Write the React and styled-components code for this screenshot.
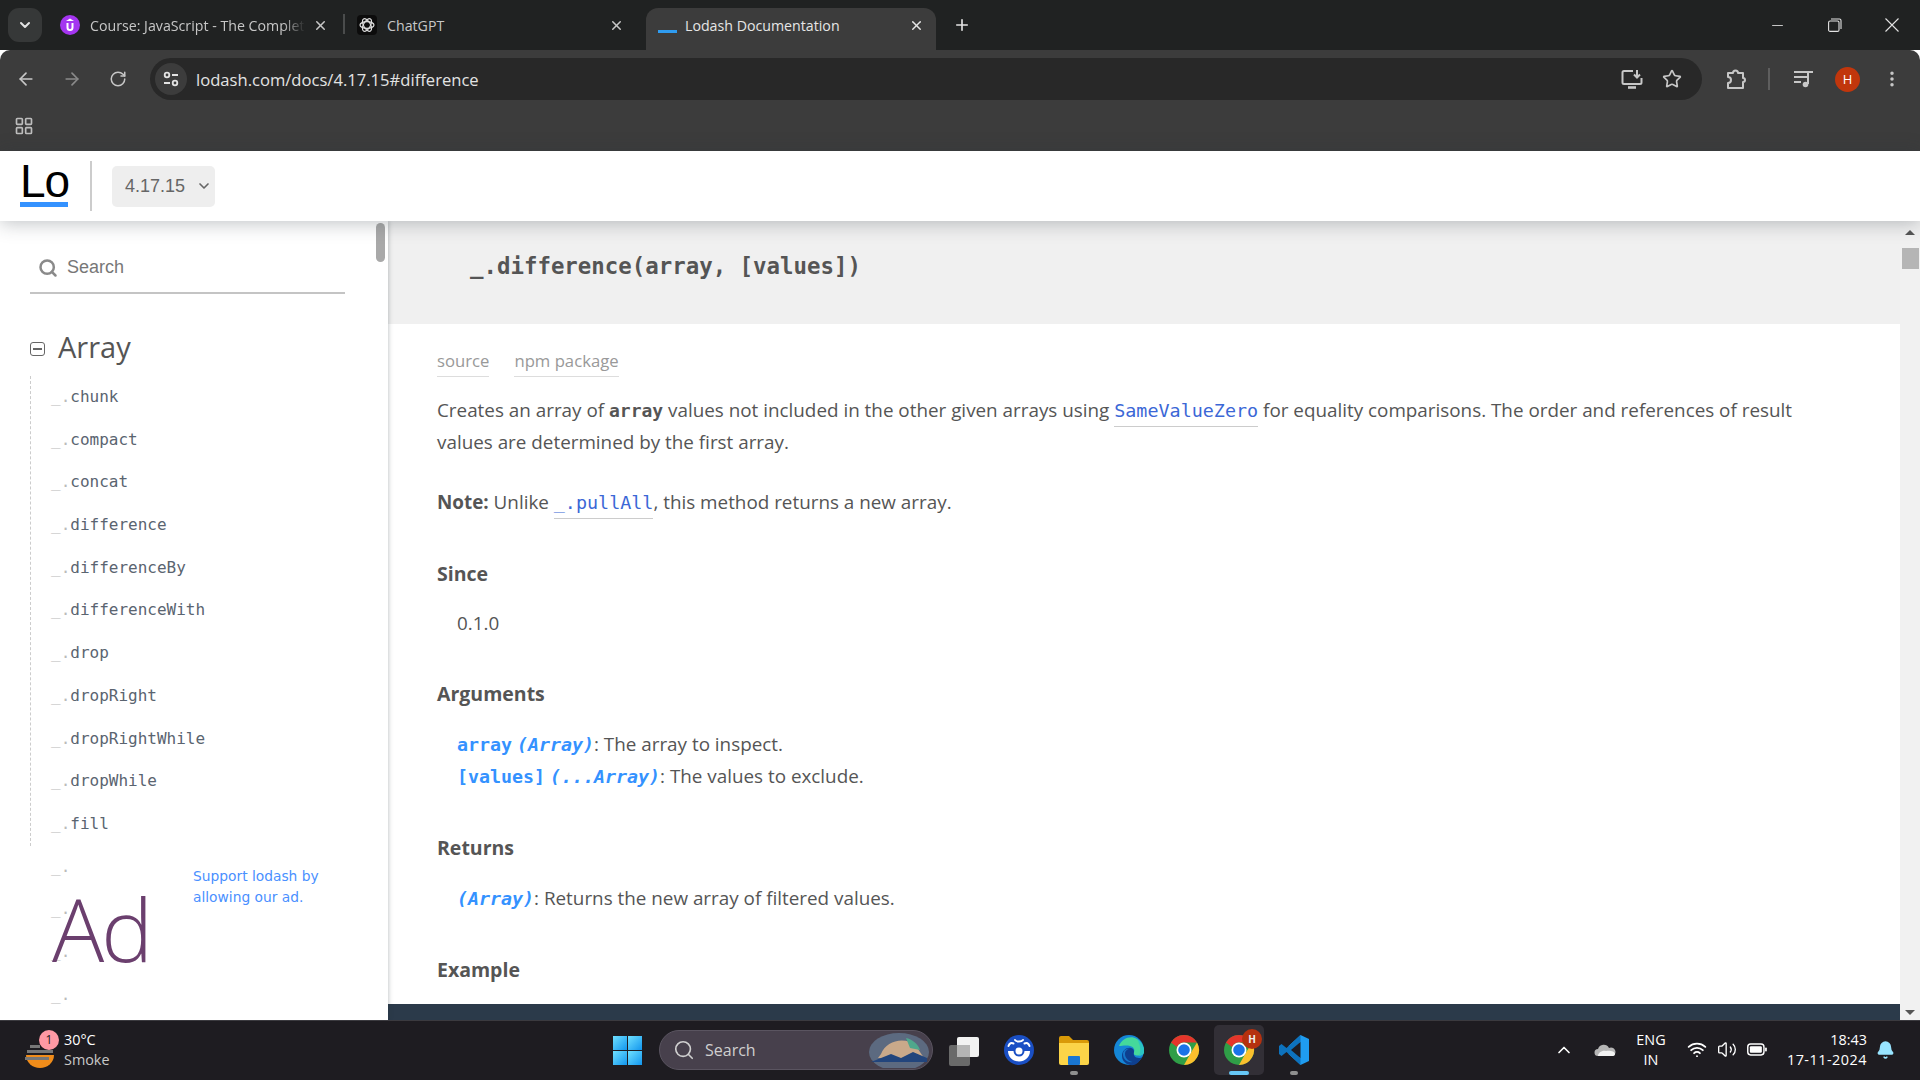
import React from 'react';
import styled, { createGlobalStyle } from 'styled-components';
import {
  ArrowLeft, ArrowRight, Bell, ChevronDown, ChevronUp, EllipsisVertical, LayoutGrid,
  Minus, Plus, RotateCw, Search, Star, Volume2, Wifi, X,
} from 'lucide-react';

const GlobalStyle = createGlobalStyle`
  html, body { margin: 0; padding: 0; background: #fff; overflow: hidden; }
  * { box-sizing: border-box; }
`;

const SANS = '"Open Sans", "Noto Sans", sans-serif';
const MONO = '"DejaVu Sans Mono", "Liberation Mono", monospace';

const Page = styled.div`
  width: 1920px;
  height: 1080px;
  display: flex;
  flex-direction: column;
  overflow: hidden;
  font-family: ${SANS};
`;

/* browser chrome */
const TabStrip = styled.div`
  height: 50px;
  flex: none;
  background: #202222;
  display: flex;
  align-items: flex-end;
  padding-left: 8px;
  color: #c7c7c7;
`;
const TabMenu = styled.div`
  width: 34px;
  height: 34px;
  margin-bottom: 8px;
  margin-right: 6px;
  border-radius: 11px;
  background: #363838;
  color: #e3e3e3;
  display: flex;
  align-items: center;
  justify-content: center;
`;
const Tab = styled.div`
  width: ${(p) => p.$w}px;
  height: 42px;
  padding: 0 12px 8px 12px;
  display: flex;
  align-items: center;
  border-radius: 12px 12px 0 0;
  background: ${(p) => (p.$active ? '#3c3c3c' : 'transparent')};
  color: ${(p) => (p.$active ? '#e6e6e6' : '#c7c7c7')};
  font-size: 14.2px;
  margin-left: ${(p) => p.$ml || 0}px;
`;
const TabIcon = styled.div`
  width: 20px;
  height: 20px;
  flex: none;
  margin-right: ${(p) => p.$gap || 10}px;
  display: flex;
  align-items: center;
  justify-content: center;
`;
const TabTitle = styled.div`
  flex: 1;
  white-space: nowrap;
  overflow: hidden;
  mask-image: ${(p) => (p.$fade ? 'linear-gradient(90deg, #000 90%, transparent 100%)' : 'none')};
`;
const TabSeparator = styled.div`
  width: 2px;
  height: 20px;
  background: #4a4c4c;
  margin: 0 0 16px 3px;
`;
const TabAdd = styled.div`
  width: 30px;
  height: 30px;
  margin: 0 0 10px 11px;
  color: #e3e3e3;
  display: flex;
  align-items: center;
  justify-content: center;
`;
const WindowControls = styled.div`
  margin-left: auto;
  height: 50px;
  display: flex;
  color: #e3e3e3;
`;
const WindowButton = styled.div`
  width: 57px;
  height: 50px;
  display: flex;
  align-items: center;
  justify-content: center;
`;
const Toolbar = styled.div`
  height: 58px;
  flex: none;
  background: #3c3c3c;
  border-radius: 10px 10px 0 0;
  display: flex;
  align-items: center;
  padding: 0 10px 0 8px;
  gap: 10px;
  color: #c7c7c7;
`;
const NavButton = styled.div`
  width: 36px;
  height: 36px;
  flex: none;
  display: flex;
  align-items: center;
  justify-content: center;
  color: ${(p) => (p.$dim ? '#8a8a8a' : '#c7c7c7')};
`;
const AddressBar = styled.div`
  width: 1552px;
  height: 42px;
  flex: none;
  margin-left: 4px;
  margin-right: 6px;
  border-radius: 21px;
  background: #282828;
  display: flex;
  align-items: center;
  padding: 0 20px 0 5px;
`;
const SiteInfo = styled.div`
  width: 32px;
  height: 32px;
  border-radius: 50%;
  background: #3c3c3c;
  color: #e3e3e3;
  display: flex;
  align-items: center;
  justify-content: center;
  margin-right: 9px;
`;
const UrlText = styled.div`
  flex: 1;
  font-size: 16.6px;
  color: #e3e3e3;
`;
const AddressActions = styled.div`
  display: flex;
  align-items: center;
  gap: 19px;
  color: #c7c7c7;
`;
const ToolDivider = styled.div`
  width: 2px;
  height: 22px;
  background: #5e5e5e;
  margin: 0 6px 0 4px;
`;
const Avatar = styled.div`
  width: 25px;
  height: 25px;
  flex: none;
  margin-left: 3px;
  border-radius: 50%;
  background: #c1360c;
  color: #fff;
  font-size: 13px;
  display: flex;
  align-items: center;
  justify-content: center;
`;
const MenuButton = styled(NavButton)`
  margin-left: 4px;
`;
const BookmarksBar = styled.div`
  height: 43px;
  flex: none;
  background: #3c3c3c;
  display: flex;
  align-items: center;
  padding: 0 0 8px 14px;
  color: #bdbdbd;
`;

/* site header */
const SiteHeader = styled.header`
  height: 70px;
  flex: none;
  background: #fff;
  display: flex;
  align-items: center;
  padding-left: 20px;
  position: relative;
  z-index: 3;
  box-shadow: 0 2px 18px rgba(40, 50, 60, 0.3);
`;
const Logo = styled.div`
  width: 48px;
  height: 47px;
  margin-bottom: 5px;
  font-family: "Liberation Sans", Arial, sans-serif;
  font-size: 46px;
  letter-spacing: -1px;
  line-height: 42px;
  color: #000;
  border-bottom: 5px solid #3492ff;
`;
const HeaderDivider = styled.div`
  width: 2px;
  height: 50px;
  background: #ccc;
  margin: 0 20px 0 22px;
`;
const VersionSelect = styled.div`
  width: 103px;
  height: 41px;
  border-radius: 5px;
  background: #eee;
  color: #666;
  font-family: "Liberation Sans", Arial, sans-serif;
  font-size: 18px;
  display: flex;
  align-items: center;
  justify-content: space-between;
  padding: 0 3px 0 13px;
`;

/* main area */
const Main = styled.div`
  flex: 1;
  min-height: 0;
  display: flex;
  overflow: hidden;
`;
const Sidebar = styled.aside`
  width: 388px;
  flex: none;
  background: #fff;
  position: relative;
  z-index: 2;
  overflow: hidden;
  padding-left: 30px;
  box-shadow: 1px 0 4px rgba(40, 50, 60, 0.25);
`;
const SidebarThumb = styled.div`
  position: absolute;
  top: 2px;
  right: 3px;
  width: 9px;
  height: 39px;
  border-radius: 5px;
  background: #a9a9a9;
`;
const SearchField = styled.div`
  width: 315px;
  height: 52px;
  margin-top: 21px;
  padding: 1px 0 0 8px;
  display: flex;
  align-items: center;
  gap: 9px;
  border-bottom: 2px solid #c4c4c4;
  color: #777;
  font-family: "Liberation Sans", Arial, sans-serif;
  font-size: 18px;
  svg { color: #8a8a8a; }
`;
const GroupTitle = styled.div`
  margin-top: 27px;
  height: 50px;
  display: flex;
  align-items: center;
  font-size: 29px;
  color: #555;
`;
const Collapse = styled.span`
  width: 15px;
  height: 14px;
  margin: 6px 13px 0 0;
  border: 1.5px solid #666;
  border-radius: 3px;
  display: flex;
  align-items: center;
  justify-content: center;
  &::after {
    content: '';
    width: 9px;
    height: 1.5px;
    background: #666;
  }
`;
const MethodList = styled.ul`
  list-style: none;
  margin: ${(p) => p.$mt || 0}px 0 0;
  padding: 0 0 0 20px;
  border-left: ${(p) => (p.$plain ? '1px solid transparent' : '1px dashed #ccc')};
`;
const MethodRow = styled.li`
  height: 42.7px;
  line-height: 42.7px;
  font-family: ${MONO};
  font-size: 16px;
  color: #5a6470;
  span { color: #bbb; }
`;
const AdSlot = styled.div`
  position: absolute;
  left: 52px;
  top: 645px;
  width: 300px;
  height: 130px;
  display: flex;
`;
const AdMark = styled.div`
  width: 141px;
  font-size: 87px;
  font-weight: 300;
  line-height: 130px;
  letter-spacing: -3px;
  color: #6b3f6e;
  margin-top: -3px;
`;
const AdNote = styled.div`
  font-family: "DejaVu Sans", sans-serif;
  font-size: 13.8px;
  line-height: 21px;
  color: #4a90ff;
`;

const Content = styled.main`
  flex: 1;
  min-width: 0;
  display: flex;
  flex-direction: column;
  background: #fff;
  color: #555;
  font-size: 18.85px;
`;
const MethodHeader = styled.h3`
  height: 103px;
  flex: none;
  margin: 0;
  background: #f0f0f0;
  padding: 0 0 14px 82px;
  display: flex;
  align-items: center;
  font-family: ${MONO};
  font-size: 22.4px;
  font-weight: bold;
  color: #555;
`;
const Body = styled.div`
  flex: 1;
  padding: 22px 49px 0;
`;
const SourceLinks = styled.div`
  display: flex;
  gap: 25px;
  height: 32px;
  font-size: 16.7px;
  color: #999;
`;
const SourceLink = styled.span`
  height: 31px;
  line-height: 30px;
  border-bottom: 1px solid #ddd;
`;
const Para = styled.p`
  margin: ${(p) => p.$mt}px 0 0;
  line-height: 32px;
  white-space: pre-wrap;
`;
const Code = styled.code`
  font-family: ${MONO};
  font-size: 18px;
  line-height: 1;
  font-weight: bold;
  color: #555;
`;
const DocLink = styled.a`
  color: #3b67d6;
  font-family: ${MONO};
  font-size: 18.4px;
  line-height: 1;
  padding-bottom: 5px;
  border-bottom: 1px solid #ccc;
`;
const Section = styled.h4`
  margin: ${(p) => p.$mt}px 0 0;
  height: 32px;
  line-height: 32px;
  font-size: 19.5px;
  font-weight: bold;
  color: #555;
`;
const Indented = styled.div`
  margin: ${(p) => p.$mt}px 0 0 20px;
  line-height: 32px;
`;
const Param = styled.span`
  font-family: ${MONO};
  font-size: 18.3px;
  line-height: 1;
  font-weight: bold;
  font-style: ${(p) => (p.$italic ? 'italic' : 'normal')};
  color: #3492ff;
`;
const CodeBlockEdge = styled.div`
  height: 16px;
  flex: none;
  background: #2b3a4a;
`;
const PageScrollbar = styled.div`
  width: 20px;
  flex: none;
  background: #f1f1f1;
  display: flex;
  flex-direction: column;
  align-items: center;
  justify-content: space-between;
  padding: 9px 0 5px;
`;
const ScrollArrow = styled.div`
  width: 0;
  height: 0;
  border-left: 5px solid transparent;
  border-right: 5px solid transparent;
  border-${(p) => (p.$down ? 'top' : 'bottom')}: 5px solid #555;
`;
const ScrollThumb = styled.div`
  width: 17px;
  height: 21px;
  margin-top: 13px;
  background: #b5b5b5;
`;
const ScrollTop = styled.div`
  display: flex;
  flex-direction: column;
  align-items: center;
`;

/* windows taskbar */
const Taskbar = styled.footer`
  height: 60px;
  flex: none;
  background: #1e1c21;
  border-top: 1px solid #3b3a3f;
  padding-bottom: 2px;
  display: flex;
  align-items: center;
  color: #fff;
  position: relative;
  z-index: 4;
`;
const Weather = styled.div`
  width: 604px;
  flex: none;
  padding-left: 25px;
  display: flex;
  align-items: center;
  font-size: 14.4px;
  line-height: 20px;
`;
const WeatherIcon = styled.div`
  width: 39px;
  height: 40px;
  position: relative;
`;
const Badge = styled.div`
  position: absolute;
  top: 0;
  left: 14px;
  width: 20px;
  height: 20px;
  border-radius: 50%;
  background: #ff99a4;
  color: #1e1c21;
  font-size: 12px;
  text-align: center;
`;
const WeatherSub = styled.div`
  color: #c8c8c8;
`;
const CenterIcons = styled.div`
  display: flex;
  align-items: center;
  gap: 5px;
`;
const TaskSlot = styled.div`
  width: 50px;
  height: 50px;
  border-radius: 5px;
  position: relative;
  display: flex;
  align-items: center;
  justify-content: center;
  background: ${(p) => (p.$active ? '#322f36' : 'transparent')};
  &::after {
    content: '';
    display: ${(p) => (p.$dot ? 'block' : 'none')};
    position: absolute;
    bottom: 0;
    left: 50%;
    transform: translateX(-50%);
    width: ${(p) => (p.$active ? '20px' : '8px')};
    height: 4px;
    border-radius: 2px;
    background: ${(p) => (p.$active ? '#66c6f5' : '#8f8f8f')};
  }
`;
const SearchPill = styled.div`
  width: 274px;
  height: 40px;
  margin-right: 1px;
  border-radius: 20px;
  background: #47404c;
  border: 1px solid #5a5460;
  display: flex;
  align-items: center;
  padding-left: 13px;
  gap: 10px;
  font-size: 16px;
  color: #cfcfcf;
  overflow: hidden;
`;
const PillArt = styled.div`
  margin-left: auto;
  display: flex;
`;
const SlotBadge = styled.div`
  position: absolute;
  top: 4px;
  right: 2px;
  width: 20px;
  height: 20px;
  border-radius: 50%;
  background: #b5310f;
  color: #eee;
  font-size: 10px;
  font-weight: bold;
  text-align: center;
  line-height: 20px;
`;
const Tray = styled.div`
  margin-left: auto;
  padding-right: 25px;
  display: flex;
  align-items: center;
  color: #fff;
`;
const TrayIcon = styled.div`
  width: ${(p) => p.$w}px;
  margin-right: ${(p) => p.$mr}px;
  flex: none;
  display: flex;
  justify-content: center;
`;
const Lang = styled.div`
  width: 40px;
  margin-right: 16px;
  text-align: center;
  font-size: 14.4px;
  line-height: 20px;
`;
const Clock = styled.div`
  width: 100px;
  margin-right: 9px;
  text-align: right;
  font-size: 14.4px;
  line-height: 20px;
`;
const ClockDate = styled.div`
  letter-spacing: 0.5px;
`;

const CourseIcon = () => (
  <svg width="20" height="20" viewBox="0 0 20 20">
    <circle cx="10" cy="10" r="10" fill="#a435f0" />
    <path d="M10 3.5 14 6H6z" fill="#fff" />
    <path d="M6.5 8v4.5a3.5 3.5 0 0 0 7 0V8h-2v4.5a1.5 1.5 0 0 1-3 0V8z" fill="#fff" />
  </svg>
);
const ChatIcon = () => (
  <svg width="20" height="20" viewBox="0 0 20 20">
    <rect width="20" height="20" rx="4" fill="#0c0c0c" />
    {[0, 60, 120].map((a) => (
      <ellipse key={a} cx="10" cy="10" rx="7" ry="3.4" fill="none" stroke="#ddd" strokeWidth="1.2" transform={`rotate(${a} 10 10)`} />
    ))}
  </svg>
);
const ChromeIcon = () => (
  <svg width="32" height="32" viewBox="0 0 32 32">
    <circle cx="16" cy="16" r="15" fill="#2f9e47" />
    <path d="M29 8.5A15 15 0 0 1 16 31l7-12.5z" fill="#fbc02d" />
    <path d="M3 8.5a15 15 0 0 1 26 0H16a7.5 7.5 0 0 0-7 4.5z" fill="#e5352b" />
    <circle cx="16" cy="16" r="7.5" fill="#fff" />
    <circle cx="16" cy="16" r="5.8" fill="#1a73e8" />
  </svg>
);
const EdgeIcon = () => (
  <svg width="32" height="32" viewBox="0 0 32 32">
    <circle cx="16" cy="16" r="15" fill="#1586d6" />
    <path d="M6 12C9 4 18 1 24 5c5 3 7.5 9 7 13-.5 3-4 4-7.5 3.5-2.5-.5-3.5-2-2.5-3.5 1-2 0-5-4-6-4-1-8 0-11 0z" fill="#45d99b" />
    <path d="M24 5c5 3 7.5 9 7 13-.5 3-3 3.5-5 3.5 2-3 2-10-2-16.5z" fill="#2bc4c4" />
    <path d="M21 31c-6 1-12-3-12-9 0-6 5-9 9-8 3 .5 3 3 3 4-1 3 1 6 5 6 1.5 0 2.5-.5 3-1-2 4-5 7-8 8z" fill="#0e3f8f" />
    <path d="M17 15c-3 0-5 2-5 5 0 4 4 8 8 8-6 1-10-3-10-8 0-3 3-6 7-5z" fill="#1576c8" />
  </svg>
);
const VsCodeIcon = () => (
  <svg width="32" height="32" viewBox="0 0 32 32">
    <path d="M22.5 1 31 5v22l-8.5 4L10 19.5 22.5 24V8L10 12.5z" fill="#1f9cf0" />
    <path d="M22.5 8V1L8.5 14l-5-4L1 12v8l2.5 2 5-4 14 13v-7L13 16z" fill="#0d72bd" />
  </svg>
);
const CopilotIcon = () => (
  <svg width="32" height="32" viewBox="0 0 32 32">
    <circle cx="16" cy="16" r="15" fill="#1a4fc4" />
    <path d="M5 17h5.500a5.500 5.500 0 0 0 11 0H27c0 6-5 10.500-11 10.500S5 23 5 17z" fill="#fff" />
    <circle cx="16" cy="17" r="3.5" fill="#fff" />
    <g fill="none" stroke="#fff" strokeWidth="2" strokeLinecap="round">
      <path d="M12 6c1.500 2 6.500 2 8 0" />
      <path d="M5.500 12c1-3 3-3.500 5-2.500" />
      <path d="M26.500 12c-1-3-3-3.500-5-2.500" />
    </g>
  </svg>
);

const methods = ['chunk', 'compact', 'concat', 'difference', 'differenceBy', 'differenceWith', 'drop', 'dropRight', 'dropRightWhile', 'dropWhile', 'fill'];

const App = () => (
  <Page>
    <GlobalStyle />
    <TabStrip>
      <TabMenu><ChevronDown size={16} strokeWidth={3} /></TabMenu>
      <Tab $w={292}>
        <TabIcon><CourseIcon /></TabIcon>
        <TabTitle $fade>Course: JavaScript - The Complete Guide</TabTitle>
        <X size={15} strokeWidth={2.4} style={{ marginLeft: 8 }} />
      </Tab>
      <TabSeparator />
      <Tab $w={291}>
        <TabIcon><ChatIcon /></TabIcon>
        <TabTitle>ChatGPT</TabTitle>
        <X size={15} strokeWidth={2.4} />
      </Tab>
      <Tab $w={290} $active $ml={10}>
        <TabIcon $gap={7}>
          <svg width="20" height="20" viewBox="0 0 20 20"><rect x="0" y="15" width="19" height="3" fill="#2f9cf0" /></svg>
        </TabIcon>
        <TabTitle>Lodash Documentation</TabTitle>
        <X size={15} strokeWidth={2.4} />
      </Tab>
      <TabAdd><Plus size={18} strokeWidth={2.2} /></TabAdd>
      <WindowControls>
        <WindowButton><Minus size={17} strokeWidth={1.2} /></WindowButton>
        <WindowButton>
          <svg width="14" height="14" viewBox="0 0 14 14" fill="none" stroke="currentColor" strokeWidth="1.1">
            <rect x="0.6" y="3" width="10.4" height="10.4" rx="1.5" />
            <path d="M3 1h8.500A1.500 1.500 0 0 1 13 2.500V11" />
          </svg>
        </WindowButton>
        <WindowButton>
          <svg width="14" height="14" viewBox="0 0 14 14" stroke="currentColor" strokeWidth="1.1"><path d="M.5.5l13 13M13.500.5l-13 13" /></svg>
        </WindowButton>
      </WindowControls>
    </TabStrip>
    <Toolbar>
      <NavButton><ArrowLeft size={20} strokeWidth={2} /></NavButton>
      <NavButton $dim><ArrowRight size={20} strokeWidth={2} /></NavButton>
      <NavButton><RotateCw size={18} strokeWidth={2} /></NavButton>
      <AddressBar>
        <SiteInfo>
          <svg width="18" height="18" viewBox="0 0 18 18" fill="none" stroke="currentColor" strokeWidth="1.8">
            <circle cx="5" cy="5" r="2.3" />
            <path d="M10 5h6M2 13h6" />
            <circle cx="13" cy="13" r="2.3" />
          </svg>
        </SiteInfo>
        <UrlText>lodash.com/docs/4.17.15#difference</UrlText>
        <AddressActions>
          <svg width="22" height="20" viewBox="0 0 22 20" fill="none" stroke="currentColor" strokeWidth="2">
            <path d="M12 2H3a1.500 1.500 0 0 0-1.500 1.500v10A1.500 1.500 0 0 0 3 15h16a1.500 1.500 0 0 0 1.500-1.500V9" />
            <path d="M7 18.500h8" strokeWidth="2.6" />
            <path d="M16 1v7M13 5.500l3 3 3-3" />
          </svg>
          <Star size={20} strokeWidth={2} />
        </AddressActions>
      </AddressBar>
      <NavButton>
        <svg width="21" height="21" viewBox="0 0 21 21" fill="none" stroke="currentColor" strokeWidth="2" strokeLinejoin="round">
          <path d="M2 4h5a2.500 2.500 0 0 1 5 0h5v5a2 2 0 0 1 0 4v6H2v-5a3 3 0 0 0 0-6z" />
        </svg>
      </NavButton>
      <ToolDivider />
      <NavButton>
        <svg width="22" height="20" viewBox="0 0 22 20" fill="none" stroke="currentColor" strokeWidth="2">
          <path d="M1 3h13M1 8h13M1 13h7" />
          <path d="M15 15V3h5" />
          <circle cx="12.5" cy="15.5" r="2.8" fill="currentColor" stroke="none" />
        </svg>
      </NavButton>
      <Avatar>H</Avatar>
      <MenuButton><EllipsisVertical size={20} strokeWidth={2.2} /></MenuButton>
    </Toolbar>
    <BookmarksBar><LayoutGrid size={20} strokeWidth={2} /></BookmarksBar>
    <SiteHeader>
      <Logo>Lo</Logo>
      <HeaderDivider />
      <VersionSelect>4.17.15<ChevronDown size={16} strokeWidth={2.5} /></VersionSelect>
    </SiteHeader>
    <Main>
      <Sidebar>
        <SidebarThumb />
        <SearchField><Search size={20} strokeWidth={3} />Search</SearchField>
        <GroupTitle><Collapse />Array</GroupTitle>
        <MethodList $mt={5}>
          {methods.map((m) => (
            <MethodRow key={m}><span>_.</span>{m}</MethodRow>
          ))}
        </MethodList>
        <MethodList $plain>
          {[1, 2, 3, 4].map((n) => (
            <MethodRow key={n}><span>_.</span></MethodRow>
          ))}
        </MethodList>
        <AdSlot>
          <AdMark>Ad</AdMark>
          <AdNote>Support lodash by<br />allowing our ad.</AdNote>
        </AdSlot>
      </Sidebar>
      <Content>
        <MethodHeader>_.difference(array, [values])</MethodHeader>
        <Body>
          <SourceLinks>
            <SourceLink>source</SourceLink>
            <SourceLink>npm package</SourceLink>
          </SourceLinks>
          <Para $mt={16}>
            Creates an array of <Code>array</Code> values not included in the other given arrays using <DocLink>SameValueZero</DocLink> for equality comparisons. The order and references of result values are determined by the first array.
          </Para>
          <Para $mt={28}>
            <b>Note:</b> Unlike <DocLink>_.pullAll</DocLink>, this method returns a new array.
          </Para>
          <Section $mt={40}>Since</Section>
          <Indented $mt={17}>0.1.0</Indented>
          <Section $mt={39}>Arguments</Section>
          <Indented $mt={18}>
            <div><Param>array</Param> <Param $italic>(Array)</Param>: The array to inspect.</div>
            <div><Param>[values]</Param> <Param $italic>(...Array)</Param>: The values to exclude.</div>
          </Indented>
          <Section $mt={40}>Returns</Section>
          <Indented $mt={18}><Param $italic>(Array)</Param>: Returns the new array of filtered values.</Indented>
          <Section $mt={40}>Example</Section>
        </Body>
        <CodeBlockEdge />
      </Content>
      <PageScrollbar>
        <ScrollTop>
          <ScrollArrow />
          <ScrollThumb />
        </ScrollTop>
        <ScrollArrow $down />
      </PageScrollbar>
    </Main>
    <Taskbar>
      <Weather>
        <WeatherIcon>
          <svg width="34" height="40" viewBox="0 0 34 40">
            <path d="M1 25h28a14 13 0 0 1-28 0z" fill="#f08c1a" />
            <rect x="5" y="15" width="10" height="3" fill="#777" />
            <rect x="2" y="20" width="26" height="3" fill="#777" />
            <rect x="0" y="27" width="24" height="3" fill="#777" />
          </svg>
          <Badge>1</Badge>
        </WeatherIcon>
        <div>
          <div>30°C</div>
          <WeatherSub>Smoke</WeatherSub>
        </div>
      </Weather>
      <CenterIcons>
        <TaskSlot>
          <svg width="35" height="30" viewBox="0 0 35 30">
            <defs>
              <linearGradient id="win" x1="0" y1="0" x2="1" y2="1"><stop offset="0" stopColor="#6fe0ff" /><stop offset="1" stopColor="#1296ee" /></linearGradient>
            </defs>
            <rect x="1" y="1" width="14" height="14" fill="url(#win)" />
            <rect x="16" y="1" width="14" height="14" fill="url(#win)" />
            <rect x="1" y="16" width="14" height="14" fill="url(#win)" />
            <rect x="16" y="16" width="14" height="14" fill="url(#win)" />
          </svg>
        </TaskSlot>
        <SearchPill>
          <Search size={22} strokeWidth={1.8} />
          Search
          <PillArt>
            <svg width="66" height="36" viewBox="0 0 66 36">
              <ellipse cx="33" cy="20" rx="30" ry="19" fill="#5c6a80" />
              <path d="M15 22C20 8 40 4 50 14l8 12H12z" fill="#c9a98a" />
              <path d="M40 6c6 1 12 6 14 12L44 16z" fill="#4fa88c" />
              <path d="M5 30l20-8 10 4 12-6 14 6v4H5z" fill="#22457c" />
            </svg>
          </PillArt>
        </SearchPill>
        <TaskSlot>
          <svg width="32" height="32" viewBox="0 0 32 32">
            <rect x="1" y="11" width="21" height="21" rx="2" fill="#6a6a6a" />
            <rect x="9" y="3" width="22" height="20" rx="2" fill="#f2f2f2" />
            <rect x="9" y="11" width="13" height="12" fill="#b5b5b5" />
          </svg>
        </TaskSlot>
        <TaskSlot><CopilotIcon /></TaskSlot>
        <TaskSlot $dot>
          <svg width="32" height="30" viewBox="0 0 32 30">
            <path d="M1 3a2 2 0 0 1 2-2h8l4 4h14a2 2 0 0 1 2 2v4H1z" fill="#d99a08" />
            <path d="M1 8h30v20a2 2 0 0 1-2 2H3a2 2 0 0 1-2-2z" fill="#fbd448" />
            <rect x="10" y="21" width="12" height="9" rx="1" fill="#1976d2" />
          </svg>
        </TaskSlot>
        <TaskSlot><EdgeIcon /></TaskSlot>
        <TaskSlot><ChromeIcon /></TaskSlot>
        <TaskSlot $active $dot>
          <ChromeIcon />
          <SlotBadge>H</SlotBadge>
        </TaskSlot>
        <TaskSlot $dot><VsCodeIcon /></TaskSlot>
      </CenterIcons>
      <Tray>
        <TrayIcon $w={20} $mr={19}><ChevronUp size={20} strokeWidth={2} /></TrayIcon>
        <TrayIcon $w={24} $mr={14}>
          <svg width="22" height="14" viewBox="0 0 22 14">
            <path d="M4 13a3.500 3.500 0 0 1 0-7 6 6 0 0 1 11-1 4 4 0 0 1 4 8z" fill="#b5b5b5" />
            <path d="M4 13c0-3 4-6 8-5 3-1 9 0 9 3 0 1-1 2-2 2z" fill="#f2f2f2" />
          </svg>
        </TrayIcon>
        <Lang>ENG<br />IN</Lang>
        <TrayIcon $w={20} $mr={10}><Wifi size={21} strokeWidth={2.2} /></TrayIcon>
        <TrayIcon $w={20} $mr={10}><Volume2 size={21} strokeWidth={1.6} /></TrayIcon>
        <TrayIcon $w={20} $mr={0}>
          <svg width="21" height="13" viewBox="0 0 21 13" fill="none">
            <rect x="0.8" y="0.8" width="17" height="11.4" rx="3" stroke="#fff" strokeWidth="1.5" />
            <rect x="3" y="3" width="12.6" height="7" rx="1.2" fill="#fff" />
            <rect x="19" y="4.500" width="1.8" height="4" rx="0.8" fill="#fff" />
          </svg>
        </TrayIcon>
        <Clock>18:43<ClockDate>17-11-2024</ClockDate></Clock>
        <TrayIcon $w={19} $mr={0}><Bell size={20} fill="#98e4ff" color="#98e4ff" /></TrayIcon>
      </Tray>
    </Taskbar>
  </Page>
);

export default App;
